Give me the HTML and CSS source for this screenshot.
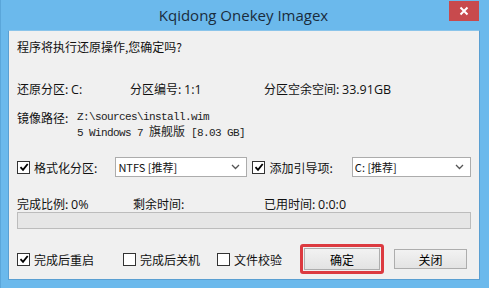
FILE: index.html
```html
<!DOCTYPE html>
<html>
<head>
<meta charset="utf-8">
<link rel="stylesheet" href="styles.css">
</head>
<body>
<div class="window">
  <div class="titlebar">
    <span class="spacer"></span>
    <span class="title">Kqidong Onekey Imagex</span>
    <span class="close"><svg width="10" height="10" viewBox="0 0 10 10"><path d="M1.5 1.5L8.5 8.5M8.5 1.5L1.5 8.5" stroke="#fff" stroke-width="2"/></svg></span>
  </div>
  <div class="client">
    <div class="question">程序将执行还原操作,您确定吗?</div>
    <div class="info">
      <span>还原分区: <span class="lat">C:</span></span>
      <span>分区编号: <span class="lat">1:1</span></span>
      <span>分区空余空间: <span class="lat">33.91GB</span></span>
    </div>
    <div class="path">
      <span class="plabel">镜像路径:</span>
      <div class="mono">
        <div>Z:\sources\install.wim</div>
        <div>5 Windows 7 <span class="cjk">旗舰版</span> [8.03 GB]</div>
      </div>
    </div>
    <div class="opts">
      <span class="cb checked"><svg width="10" height="10" viewBox="0 0 10 10"><path d="M1.5 5.2L4 7.8L8.7 2" fill="none" stroke="#000" stroke-width="1.8"/></svg></span>
      <span class="olabel">格式化分区:</span>
      <span class="select s1">NTFS [推荐]<svg class="chev" width="9" height="6" viewBox="0 0 9 6"><path d="M1 1L4.5 4.5L8 1" fill="none" stroke="#555" stroke-width="1.3"/></svg></span>
      <span class="cb checked cb2"><svg width="10" height="10" viewBox="0 0 10 10"><path d="M1.5 5.2L4 7.8L8.7 2" fill="none" stroke="#000" stroke-width="1.8"/></svg></span>
      <span class="olabel">添加引导项:</span>
      <span class="select s2">C: [推荐]<svg class="chev" width="9" height="6" viewBox="0 0 9 6"><path d="M1 1L4.5 4.5L8 1" fill="none" stroke="#555" stroke-width="1.3"/></svg></span>
    </div>
    <div class="progress-labels">
      <span>完成比例: <span class="lat">0%</span></span>
      <span>剩余时间:</span>
      <span>已用时间: <span class="lat">0:0:0</span></span>
    </div>
    <div class="progress"></div>
    <div class="bottom">
      <span class="check-item w1"><span class="cb checked"><svg width="10" height="10" viewBox="0 0 10 10"><path d="M1.5 5.2L4 7.8L8.7 2" fill="none" stroke="#000" stroke-width="1.8"/></svg></span>完成后重启</span>
      <span class="check-item w2"><span class="cb"></span>完成后关机</span>
      <span class="check-item w3"><span class="cb"></span>文件校验</span>
      <span class="focus"><span class="btn">确定</span></span>
      <span class="btn btn2">关闭</span>
    </div>
  </div>
</div>
</body>
</html>
```
FILE: styles.css
```css
html, body {
  margin: 0;
  padding: 0;
}
body {
  width: 489px;
  height: 288px;
  overflow: hidden;
  font-family: "Noto Sans CJK SC", "Noto Sans", sans-serif;
  font-size: 12px;
  color: #111;
}
.window {
  width: 489px;
  height: 288px;
  box-sizing: border-box;
  background: #6bb9ec;
  border-left: 1px solid #5aa6da;
  padding: 0 9px 8px 7px;
  display: flex;
  flex-direction: column;
}
.titlebar {
  height: 30px;
  display: grid;
  grid-template-columns: 1fr auto 1fr;
  align-items: start;
  margin-right: 1px;
}
.title {
  font-family: "Open Sans", "Liberation Sans", sans-serif;
  font-size: 15px;
  color: #1a2c3c;
  line-height: 30px;
}
.close {
  justify-self: end;
  width: 30px;
  height: 20px;
  margin-top: 1px;
  background: #c84a4d;
  display: flex;
  align-items: center;
  justify-content: center;
}
.client {
  flex: 1;
  background: #f0f0f0;
  border: 1px solid #5a9fd2;
  border-top-color: #8ac4ea;
  padding: 0 8px;
  display: flex;
  flex-direction: column;
}
.lat {
  font-family: "Open Sans", "Noto Sans", sans-serif;
  font-size: 12.5px;
}
.question {
  margin-top: 7px;
  line-height: 18px;
}
.info {
  margin-top: 24px;
  display: grid;
  grid-template-columns: 113px 134px auto;
  line-height: 18px;
}
.path {
  margin-top: 10px;
  display: flex;
  align-items: flex-start;
}
.plabel {
  width: 60px;
  line-height: 18px;
}
.mono {
  margin-top: 2px;
  font-family: "Liberation Mono", monospace;
  font-size: 11px;
  letter-spacing: -0.6px;
  line-height: 13px;
  color: #222;
}
.mono .cjk {
  font-family: "Noto Sans CJK SC", sans-serif;
  font-size: 12px;
  letter-spacing: 0;
}
.opts {
  margin-top: 16px;
  display: flex;
  align-items: center;
  height: 22px;
}
.cb {
  width: 11px;
  height: 11px;
  border: 1px solid #333;
  background: #fff;
  display: inline-flex;
  align-items: center;
  justify-content: center;
  flex: none;
}
.olabel {
  margin-left: 4px;
  width: 82px;
}
.opts .cb2 {
  margin-left: 5px;
}
.select {
  height: 20px;
  box-sizing: border-box;
  background: #fff;
  border: 1px solid #acacac;
  display: flex;
  align-items: center;
  padding-left: 2px;
  font-size: 11px;
}
.s1 { width: 133px; }
.s2 { width: 120px; margin-left: 1px; }
.chev {
  margin-left: auto;
  margin-right: 6px;
}
.progress-labels {
  margin-top: 17px;
  display: grid;
  grid-template-columns: 116px 131px auto;
  line-height: 18px;
}
.progress {
  margin-top: -2px;
  height: 17px;
  width: 454px;
  box-sizing: border-box;
  background: #e6e6e6;
  border: 1px solid #bcbcbc;
}
.bottom {
  margin-top: 15px;
  display: flex;
  align-items: center;
  height: 30px;
}
.check-item {
  display: flex;
  align-items: center;
  gap: 4px;
}
.w1 { width: 106px; }
.w2 { width: 94px; }
.w3 { width: 83px; }
.focus {
  width: 84px;
  height: 30px;
  box-sizing: border-box;
  border: 3px solid #dc3a40;
  border-radius: 3px;
  padding: 1px;
  display: flex;
}
.btn {
  flex: 1;
  box-sizing: border-box;
  border: 1px solid #adadad;
  background: linear-gradient(#f2f2f2, #e3e3e3);
  display: flex;
  align-items: center;
  justify-content: center;
  color: #000;
}
.btn2 {
  flex: none;
  width: 73px;
  height: 20px;
  margin-left: 10px;
}
```
